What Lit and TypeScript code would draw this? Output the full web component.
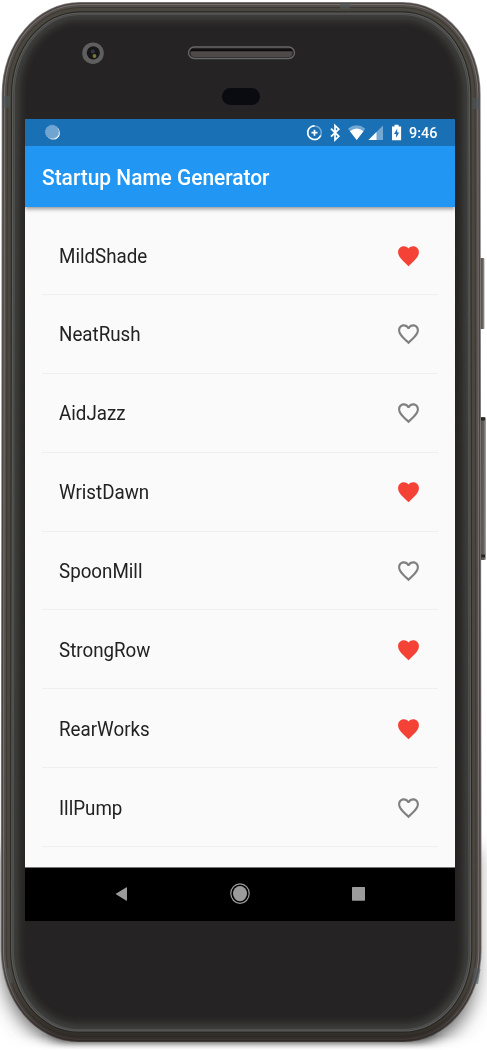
import { LitElement, html, svg, css } from "lit";
import { customElement, property } from "lit/decorators.js";

/** Outline of the handset body, inset by d pixels. */
const outline = (d: number): string => {
  const l = 1.7 + d, r = 480.6 - d, t = 2 + d, b = 1042 - d;
  const rx = 78 - d, ry = 92 - d;
  return `M${l + rx} ${t}H${r - rx}A${rx} ${ry} 0 0 1 ${r} ${t + ry}L${r + 1} ${b - ry}A${rx} ${ry} 0 0 1 ${r + 1 - rx} ${b}H${l - 1 + rx}A${rx} ${ry} 0 0 1 ${l - 1} ${b - ry}L${l} ${t + ry}A${rx} ${ry} 0 0 1 ${l + rx} ${t}Z`;
};

const RIM: [number, string][] = [
  [0, "#858280"], [0.8, "#4a4542"], [2.3, "#80797a"], [3.1, "#544e4a"],
  [5, "#3c3835"], [6, "#4a473e"], [9.3, "#292826"], [10.4, "#5e5e5e"],
  [11.4, "#474746"], [12.3, "#555554"], [13.1, "#3b3b3a"], [15, "#393938"], [16.5, "#353534"],
  [18, "#31302f"], [19.5, "#2d2c2b"], [21, "#2a2928"], [23, "#272525"], [25, "#252323"],
];

@customElement("phone-shell")
class PhoneShell extends LitElement {
  static styles = css`
    :host { display: block; }
    svg { display: block; }
  `;
  render() {
    return html`<svg width="487" height="1050" viewBox="0 0 487 1050">
      <defs>
        <filter id="soft" x="-20%" y="-20%" width="140%" height="140%"><feGaussianBlur stdDeviation="11 9" /></filter>
        <filter id="near" x="-20%" y="-100%" width="140%" height="300%"><feGaussianBlur stdDeviation="9 3" /></filter>
        <linearGradient id="floor" x1="0" y1="0" x2="0" y2="1">
          <stop offset="0" stop-color="#fff" stop-opacity="0" />
          <stop offset="1" stop-color="#fff" />
        </linearGradient>
        <linearGradient id="shade" gradientUnits="userSpaceOnUse" x1="0" y1="970" x2="0" y2="1042">
          <stop offset="0" stop-color="#241f1b" stop-opacity="0" />
          <stop offset="1" stop-color="#241f1b" stop-opacity=".7" />
        </linearGradient>
        <linearGradient id="key" x1="0" x2="1">
          <stop offset="0" stop-color="#302e2c" /><stop offset=".35" stop-color="#55544e" />
          <stop offset=".7" stop-color="#65645f" /><stop offset="1" stop-color="#aaa" />
        </linearGradient>
      </defs>
      <path d="M4 850H474V970Q470 1042 410 1044H76Q16 1042 4 970Z" fill="#555" filter="url(#soft)" />
      <rect x="56" y="1032" width="372" height="14" fill="#2a2a2a" filter="url(#near)" />
      <rect x="0" y="1036" width="487" height="14" fill="url(#floor)" />
      <rect x="479" y="258" width="5.5" height="71" rx="1" fill="url(#key)" />
      <rect x="479" y="417" width="7" height="143" rx="1.5" fill="url(#key)" />
      <path d="M480 419h5M480 556h5" stroke="#292725" stroke-width="3" />
      ${RIM.slice(0, 6).map(([d, c]) => svg`<path d=${outline(d)} fill=${c} />`)}
      <path d=${outline(0)} fill="url(#shade)" />
      ${RIM.slice(6).map(([d, c]) => svg`<path d=${outline(d)} fill=${c} />`)}
      <g fill="#4c565c" opacity=".6">
        <path d="M2.5 96H10V108H2.5ZM472.500 98H480V109H472.500ZM340 3.500H350V9H340Z" />
        <path d="M7 969L9.500 968L12.500 983L10 984ZM473.500 968L480.500 969L478 984L472 983Z" />
      </g>
      <circle cx="93" cy="53.2" r="10.8" fill="#5f5f60" />
      <circle cx="93.3" cy="52.8" r="6.6" fill="#171716" />
      <circle cx="92.8" cy="51.5" r="2" fill="#33334b" />
      <circle cx="94.5" cy="56" r="1.9" fill="#77753a" />
      <rect x="188.5" y="47" width="106" height="11.5" rx="5.75" fill="#242222" stroke="#68676a" stroke-width="1.3" />
      <path d="M190.500 52.500Q191 50.500 194 50.500H289Q292 50.500 292.500 52.500Q292 57 289 57H194Q191 57 190.500 52.500Z" fill="#4f4a49" />
      <path d="M191 50.2H292" stroke="#0d0c0c" stroke-width="2" />
      <rect x="222" y="88" width="38" height="17" rx="8.5" fill="#0a0b10" />
    </svg>`;
  }
}

@customElement("status-bar")
class StatusBar extends LitElement {
  static styles = css`
    :host {
      display: flex; align-items: center; box-sizing: border-box;
      height: 27px; padding: 0 17px 0 20px; background: #1a70b5; color: #fff;
      font: 500 15.5px Roboto, sans-serif;
    }
    .icons { margin-left: auto; }
    svg { display: block; }
    .time { width: 29px; margin-left: 7px; padding-top: 2px; line-height: 27px; white-space: nowrap; }
    .digits { display: inline-block; transform: scaleX(.93); transform-origin: left; }
  `;
  render() {
    return html`
      <svg width="16" height="27" viewBox="0 0 16 27">
        <circle cx="8.3" cy="14" r="6.6" fill="#fff" />
        <circle cx="7.2" cy="13" r="6.8" fill="#70a5d2" stroke="#91b9dc" stroke-dasharray="1 1" />
      </svg>
      <svg class="icons" width="96" height="27" viewBox="306 119 96 27">
        <circle cx="314.5" cy="132.7" r="6.8" fill="none" stroke="#73a8d3" stroke-width="1.5" />
        <path d="M314.5 125.9A6.8 6.8 0 1 0 320.7 135.5M314.5 129.7V135.7M311.5 132.7H317.5" fill="none" stroke="#fff" stroke-width="1.7" />
        <path d="M331 128.7L338.8 136.3L335 140V125.6L338.8 129.2L331 136.6" fill="none" stroke="#fff" stroke-width="1.7" />
        <path d="M348 128.7Q356.5 121.8 365.3 128.7L356.7 140Z" fill="#73a8d3" />
        <path d="M350 131.2Q356.6 125.6 363.5 131.2L356.7 140Z" fill="#fff" />
        <path d="M368.5 140L383 125.5V140Z" fill="#73a8d3" />
        <path d="M368.5 140L376.5 132V140Z" fill="#fff" />
        <path d="M392 126.4H394.5V124.8H398.6V126.4H401.1V140.3H392Z" fill="#fff" />
        <path d="M397.2 128.8L394 134.1H396.1V137.8L399.2 132.5H397.2Z" fill="#1a70b5" />
      </svg>
      <div class="time"><span class="digits">9:46</span></div>`;
  }
}

@customElement("name-row")
class NameRow extends LitElement {
  @property() name = "";
  @property({ type: Boolean }) saved = false;
  static styles = css`
    :host {
      display: flex; align-items: center; justify-content: space-between; box-sizing: border-box;
      height: 78.85px; margin: 0 17px; padding: 1px 17px 0; border-bottom: 1px solid #efefef;
      font: 400 20px Roboto, sans-serif; color: #222;
    }
    .name { display: inline-block; transform: scaleX(.938); transform-origin: left; }
    svg { display: block; }
    .on { fill: #f44336; }
    .off { fill: #808080; }
  `;
  render() {
    return html`<span class="name">${this.name}</span>
      <svg class=${this.saved ? "on" : "off"} width="25" height="26" viewBox="0 0 24 24" preserveAspectRatio="none">
        ${this.saved
          ? svg`<path d="M12 21.35l-1.45-1.32C5.4 15.36 2 12.28 2 8.5 2 5.42 4.42 3 7.5 3c1.74 0 3.41.81 4.5 2.09C13.09 3.81 14.76 3 16.5 3 19.58 3 22 5.42 22 8.5c0 3.78-3.4 6.86-8.55 11.54L12 21.35z" />`
          : svg`<path d="M16.5 3c-1.74 0-3.41.81-4.5 2.09C10.91 3.81 9.24 3 7.5 3 4.42 3 2 5.42 2 8.5c0 3.78 3.4 6.86 8.55 11.54L12 21.35l1.45-1.32C18.6 15.36 22 12.28 22 8.5 22 5.42 19.58 3 16.5 3zm-4.4 15.55l-.1.1-.1-.1C7.14 14.24 4 11.39 4 8.5 4 6.5 5.5 5 7.5 5c1.54 0 3.04.99 3.57 2.36h1.87C13.46 5.99 14.96 5 16.5 5c2 0 3.5 1.5 3.5 3.5 0 2.89-3.14 5.74-7.9 10.05z" />`}
      </svg>`;
  }
}

const NAMES: [string, boolean][] = [
  ["MildShade", true], ["NeatRush", false], ["AidJazz", false], ["WristDawn", true],
  ["SpoonMill", false], ["StrongRow", true], ["RearWorks", true], ["IllPump", false],
];

@customElement("app-root")
class AppRoot extends LitElement {
  static styles = css`
    :host { display: grid; width: 487px; height: 1050px; overflow: hidden; background: #fff; }
    phone-shell, .screen { grid-area: 1 / 1; }
    .screen {
      display: flex; flex-direction: column; box-sizing: border-box; z-index: 1;
      width: 430px; height: 801.5px; margin: 119px 0 0 25px; background: #fafafa;
    }
    .bar {
      display: flex; align-items: center; box-sizing: border-box; flex: none; height: 61px; padding: 1px 0 0 17px;
      background: #2196f3; color: #fff; font: 500 22px Roboto, sans-serif;
      box-shadow: 0 2px 4px rgba(0, 0, 0, .4); clip-path: inset(0 0 -10px 0); z-index: 1;
    }
    .title { display: inline-block; white-space: nowrap; transform: scaleX(.95); transform-origin: left; }
    .list { flex: 1; min-height: 0; padding-top: 9.2px; }
    .nav { flex: none; height: 53.5px; box-sizing: border-box; background: #000; border-top: 1px solid #777; }
    .nav svg { display: block; }
  `;
  render() {
    return html`
      <phone-shell></phone-shell>
      <div class="screen">
        <status-bar></status-bar>
        <div class="bar"><span class="title">Startup Name Generator</span></div>
        <div class="list">
          ${NAMES.map(([n, s]) => html`<name-row .name=${n} .saved=${s}></name-row>`)}
        </div>
        <div class="nav">
          <svg width="430" height="52" viewBox="25 868 430 52">
            <path d="M115.5 894L126 887.5Q127 887 127 888V900Q127 901 126 900.5Z" fill="#9b9b9b" />
            <ellipse cx="240" cy="893.6" rx="9.2" ry="9.8" fill="none" stroke="#9b9b9b" stroke-width="1.2" />
            <ellipse cx="240" cy="893.6" rx="7" ry="7.6" fill="#9b9b9b" />
            <rect x="352" y="887" width="13" height="13.7" rx=".6" fill="#9b9b9b" />
          </svg>
        </div>
      </div>`;
  }
}
